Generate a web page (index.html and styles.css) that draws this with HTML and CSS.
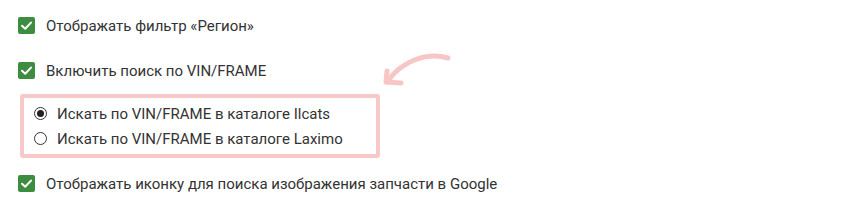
FILE: index.html
```html
<!DOCTYPE html>
<html lang="ru">
<head>
<meta charset="utf-8">
<link rel="stylesheet" href="styles.css">
</head>
<body>
<div class="page">
  <label class="check-row row1">
    <span class="cb"><svg viewBox="0 0 17 17" width="17" height="17"><path d="M4 8.8 L7.2 11.8 L13 5.6" fill="none" stroke="#fff" stroke-width="2" stroke-linecap="round" stroke-linejoin="round"/></svg></span>
    <span class="txt">Отображать фильтр «Регион»</span>
  </label>
  <label class="check-row row2">
    <span class="cb"><svg viewBox="0 0 17 17" width="17" height="17"><path d="M4 8.8 L7.2 11.8 L13 5.6" fill="none" stroke="#fff" stroke-width="2" stroke-linecap="round" stroke-linejoin="round"/></svg></span>
    <span class="txt">Включить поиск по VIN/FRAME</span>
  </label>
  <div class="hl-box">
    <label class="radio-row">
      <span class="radio on"></span>
      <span class="txt">Искать по VIN/FRAME в каталоге Ilcats</span>
    </label>
    <label class="radio-row">
      <span class="radio"></span>
      <span class="txt">Искать по VIN/FRAME в каталоге Laximo</span>
    </label>
  </div>
  <label class="check-row row4">
    <span class="cb"><svg viewBox="0 0 17 17" width="17" height="17"><path d="M4 8.8 L7.2 11.8 L13 5.6" fill="none" stroke="#fff" stroke-width="2" stroke-linecap="round" stroke-linejoin="round"/></svg></span>
    <span class="txt">Отображать иконку для поиска изображения запчасти в Google</span>
  </label>
  <svg class="arrow" width="80" height="50" viewBox="375 45 80 50">
    <path d="M448 58 C428 52 402 60 387 82" fill="none" stroke="#f7c6c6" stroke-width="5" stroke-linecap="round"/>
    <path d="M387 71 L386 82 L401 83" fill="none" stroke="#f7c6c6" stroke-width="5" stroke-linecap="round" stroke-linejoin="round"/>
  </svg>
</div>
</body>
</html>
```

FILE: styles.css
```css
html, body {
  margin: 0;
  padding: 0;
  background: #fff;
}
.page {
  position: relative;
  width: 860px;
  height: 212px;
  padding: 17px 0 0 18px;
  box-sizing: border-box;
  font-family: Roboto, "Liberation Sans", sans-serif;
  font-size: 15px;
  color: #333;
}
.check-row {
  display: flex;
  align-items: center;
  height: 17px;
}
.row2 { margin-top: 28px; }
.row4 { margin-top: 17px; }
.cb {
  width: 17px;
  height: 17px;
  background: #3d8c40;
  border-radius: 2px;
  display: flex;
  flex-shrink: 0;
}
.check-row .txt { margin-left: 11px; }
.hl-box {
  margin: 15px 0 0 2px;
  width: 360px;
  height: 64px;
  box-sizing: border-box;
  border: 4px solid #f7c8c8;
  border-radius: 3px;
  padding: 9px 0 0 10px;
  display: flex;
  flex-direction: column;
  gap: 12px;
}
.radio-row {
  display: flex;
  align-items: center;
  height: 13px;
}
.radio {
  width: 13px;
  height: 13px;
  box-sizing: border-box;
  border: 1px solid #333;
  border-radius: 50%;
  display: flex;
  align-items: center;
  justify-content: center;
  flex-shrink: 0;
}
.radio.on::after {
  content: "";
  width: 7px;
  height: 7px;
  border-radius: 50%;
  background: #222;
}
.radio-row .txt { margin-left: 10px; }
.arrow {
  position: absolute;
  left: 375px;
  top: 45px;
}
```
